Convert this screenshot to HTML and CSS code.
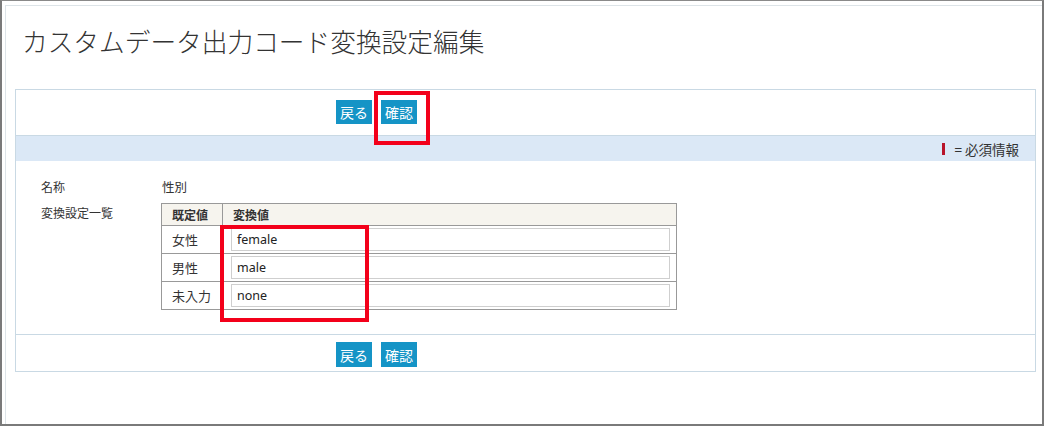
FILE: index.html
```html
<!DOCTYPE html>
<html lang="ja">
<head>
<meta charset="utf-8">
<link rel="stylesheet" href="styles.css">
</head>
<body>
<div class="frame">
  <div class="panel">
    <h1 class="title">カスタムデータ出力コード変換設定編集</h1>
    <div class="box">
      <div class="btn-row top">
        <span class="btn">戻る</span>
        <span class="btn">確認</span>
      </div>
      <div class="band">
        <span class="req-mark"></span><span class="req-text">= 必須情報</span>
      </div>
      <div class="content">
        <div class="field">
          <div class="label">名称</div>
          <div class="value">性別</div>
        </div>
        <div class="field">
          <div class="label">変換設定一覧</div>
          <table class="map">
            <thead>
              <tr><th class="c1">既定値</th><th class="c2">変換値</th></tr>
            </thead>
            <tbody>
              <tr><td class="c1">女性</td><td class="c2"><div class="input">female</div></td></tr>
              <tr><td class="c1">男性</td><td class="c2"><div class="input">male</div></td></tr>
              <tr><td class="c1">未入力</td><td class="c2"><div class="input">none</div></td></tr>
            </tbody>
          </table>
        </div>
      </div>
      <div class="btn-row bottom">
        <span class="btn">戻る</span>
        <span class="btn">確認</span>
      </div>
    </div>
  </div>
  <div class="hl hl-btn"></div>
  <div class="hl hl-inputs"></div>
</div>
</body>
</html>
```
FILE: styles.css
```css
* { box-sizing: border-box; }
html, body { margin: 0; padding: 0; background: #fff; }
body {
  font-family: "Noto Sans CJK JP", "Noto Sans", sans-serif;
  color: #333;
}
.frame {
  position: relative;
  width: 1044px;
  height: 426px;
  border: 1px solid #8a8a8a;
  border-left: 2px solid #7a7a7a;
  border-right: 2px solid #7a7a7a;
  border-bottom: 2px solid #7a7a7a;
  padding: 4px 0 0 3px;
  overflow: hidden;
}
.panel {
  height: 100%;
  border-top: 1px solid #dde4e8;
  border-left: 1px solid #dde4e8;
  padding: 0 0 0 9px;
}
.title {
  margin: 0;
  padding: 17px 0 0 7px;
  height: 83px;
  font-size: 25.7px;
  font-weight: 300;
  line-height: 36px;
  color: #333;
  letter-spacing: 0;
}
.box {
  width: 1021px;
  border: 1px solid #c9d9e4;
}
.btn-row {
  display: flex;
  gap: 9px;
  padding-left: 320px;
}
.btn-row.top { height: 46px; padding-top: 10px; border-bottom: 1px solid #c9d9e4; }
.btn-row.bottom { height: 37px; padding-top: 7px; border-top: 1px solid #c9d9e4; }
.btn-row.bottom .btn { height: 25px; }
.btn {
  display: inline-flex;
  align-items: center;
  justify-content: center;
  width: 36px;
  height: 24px;
  background: #1594c6;
  color: #fff;
  font-size: 14px;
  line-height: 1;
}
.band {
  height: 25px;
  background: #dbe8f6;
  display: flex;
  justify-content: flex-end;
  align-items: center;
  padding-right: 16px;
}
.req-mark {
  width: 3px;
  height: 12px;
  background: #b8142a;
  margin-right: 9px;
}
.req-text { font-size: 13.5px; color: #333; font-weight: 400; }
.content {
  padding: 16px 0 24px 25px;
}
.field { display: flex; }
.field + .field { margin-top: 6px; }
.label {
  width: 120px;
  font-size: 12px;
  line-height: 20px;
  color: #333;
}
.value { font-size: 12.5px; line-height: 20px; padding-left: 1px; }
.map {
  border-collapse: collapse;
  width: 516px;
  border: 1px solid #666;
  border-top-color: #999;
  border-left-color: #999;
}
.map th, .map td {
  border: 1px solid #999;
  font-size: 13px;
  padding: 0 0 0 10px;
  text-align: left;
}
.map th {
  background: #f6f4ee;
  height: 22px;
  font-weight: 700;
  font-size: 12px;
  color: #333;
}
.map td { height: 28px; }
.map .c1 { width: 61px; }
.map td.c2 { padding: 0 6px 0 8px; }
.input {
  height: 23px;
  border: 1px solid #cfcfcf;
  background: #fff;
  font-family: "Noto Sans", sans-serif;
  font-size: 12.5px;
  line-height: 21px;
  padding-left: 5px;
  color: #222;
}
.hl {
  position: absolute;
  border: 4px solid #f3001a;
}
.hl-btn { left: 372px; top: 90px; width: 56px; height: 54px; }
.hl-inputs { left: 218px; top: 224px; width: 149px; height: 97px; }
```
